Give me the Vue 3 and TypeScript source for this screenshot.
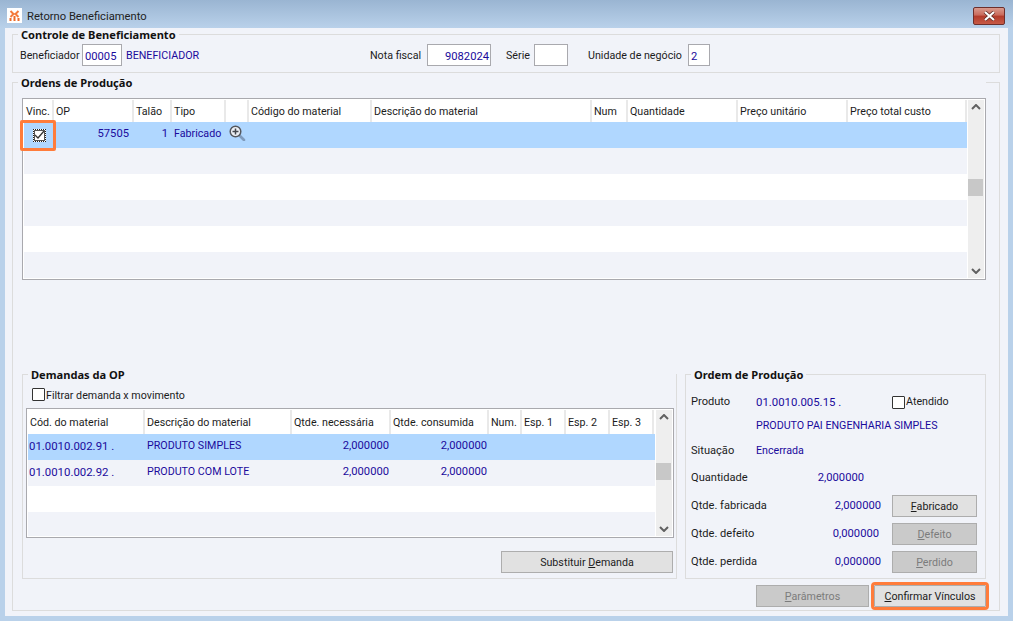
<script setup lang="ts">
const opHeaders: string[] = ['Vinc.', 'OP', 'Talão', 'Tipo', '', 'Código do material', 'Descrição do material', 'Num', 'Quantidade', 'Preço unitário', 'Preço total custo']
const opFillers: number[] = [1, 2, 3, 4, 5]
const demHeaders: string[] = ['Cód. do material', 'Descrição do material', 'Qtde. necessária', 'Qtde. consumida', 'Num.', 'Esp. 1', 'Esp. 2', 'Esp. 3']
interface Demand { code: string; desc: string; need: string; used: string }
const demands: Demand[] = [
  { code: '01.0010.002.91 .', desc: 'PRODUTO SIMPLES', need: '2,000000', used: '2,000000' },
  { code: '01.0010.002.92 .', desc: 'PRODUTO COM LOTE', need: '2,000000', used: '2,000000' },
]
</script>

<template>
  <div class="win">
    <header class="titlebar">
      <span class="appicon">
        <svg width="15" height="15" viewBox="0 0 15 15">
          <rect width="15" height="15" fill="#fff" />
          <path d="M3.5 3l3 3-3 3M11.5 3l-3 3 3 3" fill="none" stroke="#f47a3a" stroke-width="2" />
          <path d="M3.5 10v3M7.5 8v5M11.5 10v3" stroke="#ee6a28" stroke-width="2" />
        </svg>
      </span>
      <span class="wintitle">Retorno Beneficiamento</span>
      <button class="close" aria-label="Fechar">
        <svg width="13" height="10" viewBox="0 0 13 10">
          <path d="M2 1l9 8M11 1L2 9" stroke="#5c2a24" stroke-width="3.6" />
          <path d="M2 1l9 8M11 1L2 9" stroke="#fff" stroke-width="2.2" />
        </svg>
      </button>
    </header>

    <main class="client">
      <section class="group ctrl">
        <h3 class="legend">Controle de Beneficiamento</h3>
        <div class="ctrl-row">
          <span>Beneficiador</span>
          <span class="input">00005</span>
          <span class="blue name">BENEFICIADOR</span>
          <span>Nota fiscal</span>
          <span class="input right">9082024</span>
          <span class="lab-serie">Série</span>
          <span class="input"></span>
          <span class="lab-un">Unidade de negócio</span>
          <span class="input">2</span>
        </div>
      </section>

      <section class="group orders">
        <h3 class="legend">Ordens de Produção</h3>
        <div class="table op-table">
          <div class="tbody">
            <div class="row head op-cols">
              <span v-for="h in opHeaders" :key="h" class="hcell">{{ h }}</span>
            </div>
            <div class="row sel op-cols">
              <span class="cell check-cell">
                <span class="mark">
                  <svg width="11" height="10" viewBox="0 0 11 10"><path d="M1 5l3 3 6-7" fill="none" stroke="#333" stroke-width="1.3" /></svg>
                </span>
                <span class="hl"></span>
              </span>
              <span class="cell num op-num">57505</span>
              <span class="cell num op-tal">1</span>
              <span class="cell fab">Fabricado</span>
              <span class="cell zoomc">
                <svg width="17" height="16" viewBox="0 0 17 16">
                  <path d="M10 10l5 5" stroke="#7f9bbd" stroke-width="2.6" stroke-linecap="round" />
                  <circle cx="6.5" cy="6.5" r="5.3" fill="#eef1f6" stroke="#55585e" stroke-width="1.5" />
                  <path d="M3.5 6.5h6M6.5 3.5v6" stroke="#44474c" stroke-width="1.5" />
                </svg>
              </span>
            </div>
            <div v-for="n in opFillers" :key="n" class="row" :class="n % 2 ? 'alt' : 'plain'"></div>
          </div>
          <div class="scroll">
            <svg class="arrow" width="10" height="6" viewBox="0 0 10 6"><path d="M1 5l4-4 4 4" fill="none" stroke="#606060" stroke-width="2" /></svg>
            <span class="thumb op-thumb"></span>
            <svg class="arrow" width="10" height="6" viewBox="0 0 10 6"><path d="M1 1l4 4 4-4" fill="none" stroke="#606060" stroke-width="2" /></svg>
          </div>
        </div>

        <div class="lower">
          <section class="group demands">
            <h3 class="legend">Demandas da OP</h3>
            <label class="filter"><span class="box"></span>Filtrar demanda x movimento</label>
            <div class="table dem-table">
              <div class="tbody">
                <div class="row head dem-head dem-cols">
                  <span v-for="h in demHeaders" :key="h" class="hcell">{{ h }}</span>
                </div>
                <div v-for="(d, i) in demands" :key="d.code" class="row dem-cols" :class="i === 0 ? 'sel' : 'alt'">
                  <span class="cell code">{{ d.code }}</span>
                  <span class="cell desc">{{ d.desc }}</span>
                  <span class="cell num">{{ d.need }}</span>
                  <span class="cell num">{{ d.used }}</span>
                </div>
                <div class="row plain"></div>
                <div class="row alt"></div>
              </div>
              <div class="scroll">
                <svg class="arrow" width="10" height="6" viewBox="0 0 10 6"><path d="M1 5l4-4 4 4" fill="none" stroke="#606060" stroke-width="2" /></svg>
                <span class="thumb dem-thumb"></span>
                <svg class="arrow" width="10" height="6" viewBox="0 0 10 6"><path d="M1 1l4 4 4-4" fill="none" stroke="#606060" stroke-width="2" /></svg>
              </div>
            </div>
            <button class="btn subst">Substituir <u>D</u>emanda</button>
          </section>

          <section class="group order">
            <h3 class="legend">Ordem de Produção</h3>
            <div class="order-grid">
              <div class="line">
                <span class="lab">Produto</span>
                <span class="blue prod">01.0010.005.15 .</span>
                <label class="attended"><span class="box"></span>Atendido</label>
              </div>
              <div class="line"><span class="lab"></span><span class="blue">PRODUTO PAI ENGENHARIA SIMPLES</span></div>
              <div class="line"><span class="lab">Situação</span><span class="blue">Encerrada</span></div>
              <div class="line"><span class="lab">Quantidade</span><span class="blue val qty">2,000000</span></div>
              <div class="line">
                <span class="lab">Qtde. fabricada</span><span class="blue val">2,000000</span>
                <button class="btn act"><u>F</u>abricado</button>
              </div>
              <div class="line">
                <span class="lab">Qtde. defeito</span><span class="blue val def">0,000000</span>
                <button class="btn act off"><u>D</u>efeito</button>
              </div>
              <div class="line">
                <span class="lab">Qtde. perdida</span><span class="blue val">0,000000</span>
                <button class="btn act off"><u>P</u>erdido</button>
              </div>
            </div>
          </section>
        </div>

        <div class="actions">
          <button class="btn off param"><u>P</u>arâmetros</button>
          <button class="btn confirm"><u>C</u>onfirmar Vínculos</button>
        </div>
      </section>
    </main>
  </div>
</template>

<style>
html, body { margin: 0; padding: 0; }
</style>

<style scoped>
.win {
  width: 1013px;
  height: 621px;
  display: flex;
  flex-direction: column;
  background: #b9d1ea;
  font: 10.7px/14px Roboto, "Liberation Sans", sans-serif;
  color: #1c1c1c;
  overflow: hidden;
}
.titlebar {
  height: 28px;
  flex: none;
  display: flex;
  align-items: center;
  background: linear-gradient(#9ab5d2, #b9d1ea);
  padding: 6px 8px 0 7px;
  box-sizing: border-box;
}
.appicon { display: flex; width: 15px; margin: -3px 5px 0 0; }
.wintitle { font-size: 11.2px; color: #222; }
.close {
  margin-left: auto;
  margin-top: -2px;
  width: 32px;
  height: 18px;
  padding: 0;
  display: flex;
  align-items: center;
  justify-content: center;
  border: 1px solid #6d2f2b;
  border-radius: 2px;
  background: linear-gradient(#d99a8d 0, #c9695a 45%, #b23a2a 50%, #c75a46 100%);
}
.client {
  flex: 1;
  min-height: 0;
  margin: 0 5px 5px;
  padding: 6px 8px 5px 7px;
  background: #f1f3f9;
  display: flex;
  flex-direction: column;
  gap: 9px;
}
.group { border: 1px solid #dcdcdc; box-sizing: border-box; }
.legend {
  display: table;
  margin: -7px 0 0 5px;
  padding: 0 3px;
  height: 13px;
  background: #f1f3f9;
  font: 700 11.1px/13px "Noto Sans", "Liberation Sans", sans-serif;
  color: #111;
}
.orders > .legend { margin-left: -4px; }
.ctrl { height: 39px; flex: none; }
.ctrl-row {
  margin-top: 3px;
  padding-left: 7px;
  display: grid;
  grid-template-columns: 62px 40px 248px 57px 64px 43px 34px 120px 22px;
  align-items: center;
  height: 22px;
}
.ctrl-row > span:not(.input) { padding-top: 2px; }
.input {
  box-sizing: border-box;
  height: 22px;
  background: #fff;
  border: 1px solid #a9a9ae;
  color: #1a0a9c;
  font-size: 11.2px;
  line-height: 23px;
  padding: 0 1px 0 2px;
}
.right { text-align: right; }
.blue { color: #1a0a9c; }
.name { padding-left: 4px; }
.lab-serie { padding-left: 15px; }
.lab-un { padding-left: 20px; }

.orders {
  flex: 1;
  min-height: 0;
  padding: 0 13px 3px 9px;
  display: flex;
  flex-direction: column;
}
.table {
  box-sizing: border-box;
  border: 1px solid #a9a9ae;
  padding: 1px;
  background: #fff;
  display: flex;
  gap: 1px;
  overflow: hidden;
  flex: none;
}
.op-table { height: 182px; margin-top: 9px; overflow: visible; }
.tbody { flex: 1; min-width: 0; overflow: hidden; }
.op-table .tbody { overflow: visible; }
.row { height: 26px; box-sizing: border-box; }
.head { height: 22px; background: #fff; }
.dem-head { height: 24px; }
.sel { background: #b0d7ff; color: #1a0a9c; }
.alt { background: #f1f3f9; color: #1a0a9c; }
.plain { background: #fff; }
.op-cols {
  display: grid;
  grid-template-columns: 30px 80px 38px 54px 23px 123px 220px 36px 110px 110px 119px;
}
.dem-cols {
  display: grid;
  grid-template-columns: 117px 147px 99px 98px 33px 44px 44px 44px;
}
.hcell {
  border-right: 2px solid #e9e9e9;
  padding-left: 2px;
  line-height: 24px;
  height: 22px;
  white-space: nowrap;
  overflow: hidden;
  color: #1c1c1c;
  box-sizing: border-box;
}
.dem-head .hcell { line-height: 26px; height: 24px; }
.cell { line-height: 24px; white-space: nowrap; }
.num { text-align: right; padding-right: 2px; font-size: 11.2px; }
.op-num { padding-right: 5px; }
.op-tal { padding-right: 4px; }
.fab { padding-left: 2px; }
.zoomc { display: flex; align-items: center; padding: 0 0 5px 3px; box-sizing: border-box; }
.code { padding-left: 1px; font-size: 11.4px; }
.desc { padding-left: 2px; }
.check-cell { position: relative; display: flex; align-items: center; justify-content: center; }
.mark {
  width: 13px;
  height: 13px;
  box-sizing: border-box;
  background: #fff;
  border: 1px dotted #222;
  outline: 1px solid #555;
  outline-offset: -2px;
  display: flex;
  align-items: center;
  justify-content: center;
}
.hl {
  position: absolute;
  left: -4px;
  top: -2px;
  width: 36px;
  height: 31px;
  box-sizing: border-box;
  border: 3px solid #ff7c3b;
  border-radius: 2px;
}
.scroll {
  flex: none;
  width: 16px;
  background: #eeeeee;
  display: flex;
  flex-direction: column;
  align-items: center;
  position: relative;
}
.arrow { flex: none; margin: 4px 0; }
.arrow:last-child { margin-top: auto; }
.thumb { position: absolute; left: 0; width: 15px; background: #c8c8c8; }
.op-thumb { top: 79px; height: 17px; }
.dem-thumb { top: 53px; height: 17px; }

.lower {
  margin-top: auto;
  display: flex;
  gap: 8px;
}
.demands {
  width: 655px;
  height: 205px;
  display: flex;
  flex-direction: column;
}
.filter {
  margin: 7px 0 0 9px;
  height: 14px;
  display: flex;
  align-items: flex-start;
  line-height: 16px;
}
.box {
  width: 13px;
  height: 13px;
  box-sizing: border-box;
  background: #fff;
  border: 1px solid #333;
  margin-right: 1px;
  border-radius: 1px;
}
.dem-table { height: 130px; margin: 6px 2px 0 3px; }
.btn {
  font: inherit;
  box-sizing: border-box;
  height: 22px;
  padding: 1px 0 0;
  background: #e1e1e1;
  border: 1px solid #adadad;
  color: #1c1c1c;
  line-height: 20px;
}
.off { background: #cacaca; color: #7c7c7c; }
.subst { width: 172px; margin: 13px 3px 0 auto; }
.order { flex: 1; height: 205px; }
.order-grid {
  margin-top: 9px;
  padding-left: 5px;
  display: grid;
  grid-template-rows: 24px 24px 26px 27px 29px 28px 28px;
}
.line { display: flex; align-items: center; white-space: nowrap; }
.lab { width: 65px; flex: none; font-size: 11.1px; }
.prod { width: 136px; font-size: 11.4px; }
.attended { display: flex; align-items: center; }
.val { width: 125px; text-align: right; font-size: 11.2px; }
.qty { width: 108px; }
.def { width: 123px; margin-right: 2px; }
.act { width: 85px; margin-left: 11px; }
.actions {
  margin-top: 6px;
  display: flex;
  justify-content: flex-end;
  gap: 5px;
}
.param { width: 113px; }
.confirm {
  width: 112px;
  outline: 3px solid #ff7c3b;
  border-radius: 1px;
}
u { text-underline-offset: 1px; }
</style>
